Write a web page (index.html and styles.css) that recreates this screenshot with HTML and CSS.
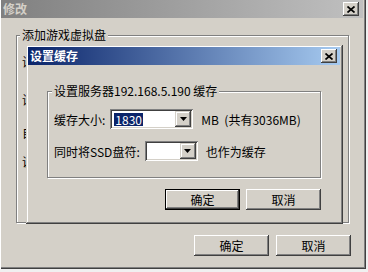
FILE: index.html
```html
<!DOCTYPE html>
<html lang="zh-CN">
<head>
    <meta charset="UTF-8">
    <title>修改</title>
    <link rel="stylesheet" href="styles.css">
</head>
<body>

    <div class="window outer">
        <div class="titlebar inactive">
            <span class="title">修改</span>
            <span class="close-btn">
                <svg width="8" height="7" viewBox="0 0 8 7"><path d="M0.5 0.5L7.5 6.5M7.5 0.5L0.5 6.5" stroke="#000" stroke-width="1.7"/></svg>
            </span>
        </div>

        <div class="outer-body">
            <fieldset class="group outer-group">
                <legend>添加游戏虚拟盘</legend>
                <!-- rows covered by the child dialog, only their left edge shows -->
                <div class="hidden-row r1">设</div>
                <div class="hidden-row r2">设</div>
                <div class="hidden-row r3">自</div>
                <div class="hidden-row r4">说</div>
            </fieldset>

            <div class="button-row outer-buttons">
                <button class="btn">确定</button>
                <button class="btn">取消</button>
            </div>
        </div>

        <!-- child dialog sits over the parent window -->
        <div class="window dialog">
            <div class="titlebar active">
                <span class="title">设置缓存</span>
                <span class="close-btn">
                    <svg width="8" height="7" viewBox="0 0 8 7"><path d="M0.5 0.5L7.5 6.5M7.5 0.5L0.5 6.5" stroke="#000" stroke-width="1.7"/></svg>
                </span>
            </div>

            <div class="dialog-body">
                <fieldset class="group cache-group">
                    <legend>设置服务器192.168.5.190 缓存</legend>

                    <div class="field-row first">
                        <span class="field-label">缓存大小:</span>
                        <span class="combo size-combo">
                            <span class="combo-text"><span class="selected">1830</span></span>
                            <span class="combo-arrow">
                                <svg width="7" height="4" viewBox="0 0 7 4"><polygon points="0,0 7,0 3.5,4" fill="#000"/></svg>
                            </span>
                        </span>
                        <span class="field-note">MB&nbsp; (共有3036MB)</span>
                    </div>

                    <div class="field-row">
                        <span class="field-label">同时将SSD盘符:</span>
                        <span class="combo ssd-combo">
                            <span class="combo-text"></span>
                            <span class="combo-arrow">
                                <svg width="7" height="4" viewBox="0 0 7 4"><polygon points="0,0 7,0 3.5,4" fill="#000"/></svg>
                            </span>
                        </span>
                        <span class="field-note">也作为缓存</span>
                    </div>
                </fieldset>

                <div class="button-row dialog-buttons">
                    <button class="btn default">确定</button>
                    <button class="btn">取消</button>
                </div>
            </div>
        </div>
    </div>

</body>
</html>
```

FILE: styles.css
```css
/* General */
* {
    box-sizing: border-box;
}

body {
    margin: 0;
    background-color: #f0f0f0;
    font-family: "Noto Sans CJK SC", sans-serif;
    font-size: 12px;
    color: #000;
    overflow: hidden;
}

/* Windows */
.window {
    background-color: #d4d0c8;
}

.outer {
    position: relative;
    width: 366px;
    height: 269px;
    padding: 0 3px 3px 1px;
    display: flex;
    flex-direction: column;
    box-shadow: inset 1px 0 #fff, inset -1px -1px #404040, inset -2px -2px #808080;
}

.dialog {
    position: absolute;
    left: 26px;
    top: 45px;
    width: 317px;
    height: 179px;
    padding: 2px 3px 3px 2px;
    box-shadow: inset -1px -1px #404040, inset 1px 1px #d4d0c8, inset -2px -2px #808080, inset 2px 2px #fff;
}

.titlebar {
    height: 18px;
    display: flex;
    align-items: center;
    justify-content: space-between;
    padding: 0 3px 0 2px;
    font-weight: bold;
    line-height: 18px;
}

.titlebar.inactive {
    background: linear-gradient(to right, #808080, #c0c0c0);
    color: #d4d0c8;
    padding-right: 4px;
}

.titlebar.active {
    background: linear-gradient(to right, #0a246a, #a6caf0);
    color: #fff;
}

.close-btn {
    width: 16px;
    height: 14px;
    display: flex;
    align-items: center;
    justify-content: center;
    background-color: #d4d0c8;
    box-shadow: inset -1px -1px #404040, inset 1px 1px #fff, inset -2px -2px #808080;
}

/* Group boxes */
.group {
    margin: 0;
    min-width: 0;
    border: 1px solid #808080;
    box-shadow: inset 1px 1px #fff, 1px 1px #fff;
}

.group legend {
    padding: 0 2px;
    margin-left: -2px;
    line-height: 14px;
    background-color: #d4d0c8;
}

.outer-body {
    flex: 1;
    padding: 10px 12px 0 15px;
    display: flex;
    flex-direction: column;
}

.outer-group {
    width: 333px;
    height: 195px;
    padding: 13px 0 0 5px;
}

.hidden-row {
    line-height: 14px;
}

.hidden-row.r2 { margin-top: 24px; }
.hidden-row.r3 { margin-top: 19px; }
.hidden-row.r4 { margin-top: 15px; }

.dialog-body {
    padding: 19px 0 0 19px;
}

.cache-group {
    width: 274px;
    height: 94px;
    padding: 11px 0 0 6px;
}

/* Form rows */
.field-row {
    display: flex;
    align-items: center;
    height: 20px;
}

.field-row + .field-row {
    margin-top: 12px;
}

.field-label {
    margin-right: 5px;
}

.combo {
    display: flex;
    height: 20px;
    padding: 2px;
    background-color: #fff;
    box-shadow: inset 1px 1px #808080, inset -1px -1px #fff, inset 2px 2px #404040, inset -2px -2px #d4d0c8;
}

.size-combo { width: 83px; }
.ssd-combo { width: 53px; }

.combo-text {
    flex: 1;
    display: flex;
    align-items: center;
}

.selected {
    margin-left: 2px;
    padding: 0 1px;
    line-height: 13px;
    background-color: #0a246a;
    color: #fff;
}

.combo-arrow {
    width: 16px;
    height: 16px;
    display: flex;
    align-items: center;
    justify-content: center;
    background-color: #d4d0c8;
    box-shadow: inset -1px -1px #404040, inset 1px 1px #d4d0c8, inset -2px -2px #808080, inset 2px 2px #fff;
}

.field-note {
    margin-left: 8px;
    white-space: pre;
}

/* Buttons */
.button-row {
    display: flex;
    justify-content: flex-end;
}

.outer-buttons {
    margin-top: 12px;
    gap: 7px;
}

.dialog-buttons {
    width: 274px;
    margin-top: 11px;
    gap: 6px;
}

.btn {
    width: 75px;
    height: 21px;
    padding: 0;
    border: 0;
    font: inherit;
    color: #000;
    background-color: #d4d0c8;
    box-shadow: inset -1px -1px #404040, inset 1px 1px #fff, inset -2px -2px #808080, inset 2px 2px #d4d0c8;
}

.btn.default {
    box-shadow: inset 0 0 0 1px #000, inset -2px -2px #404040, inset 2px 2px #fff, inset -3px -3px #808080;
}
```
